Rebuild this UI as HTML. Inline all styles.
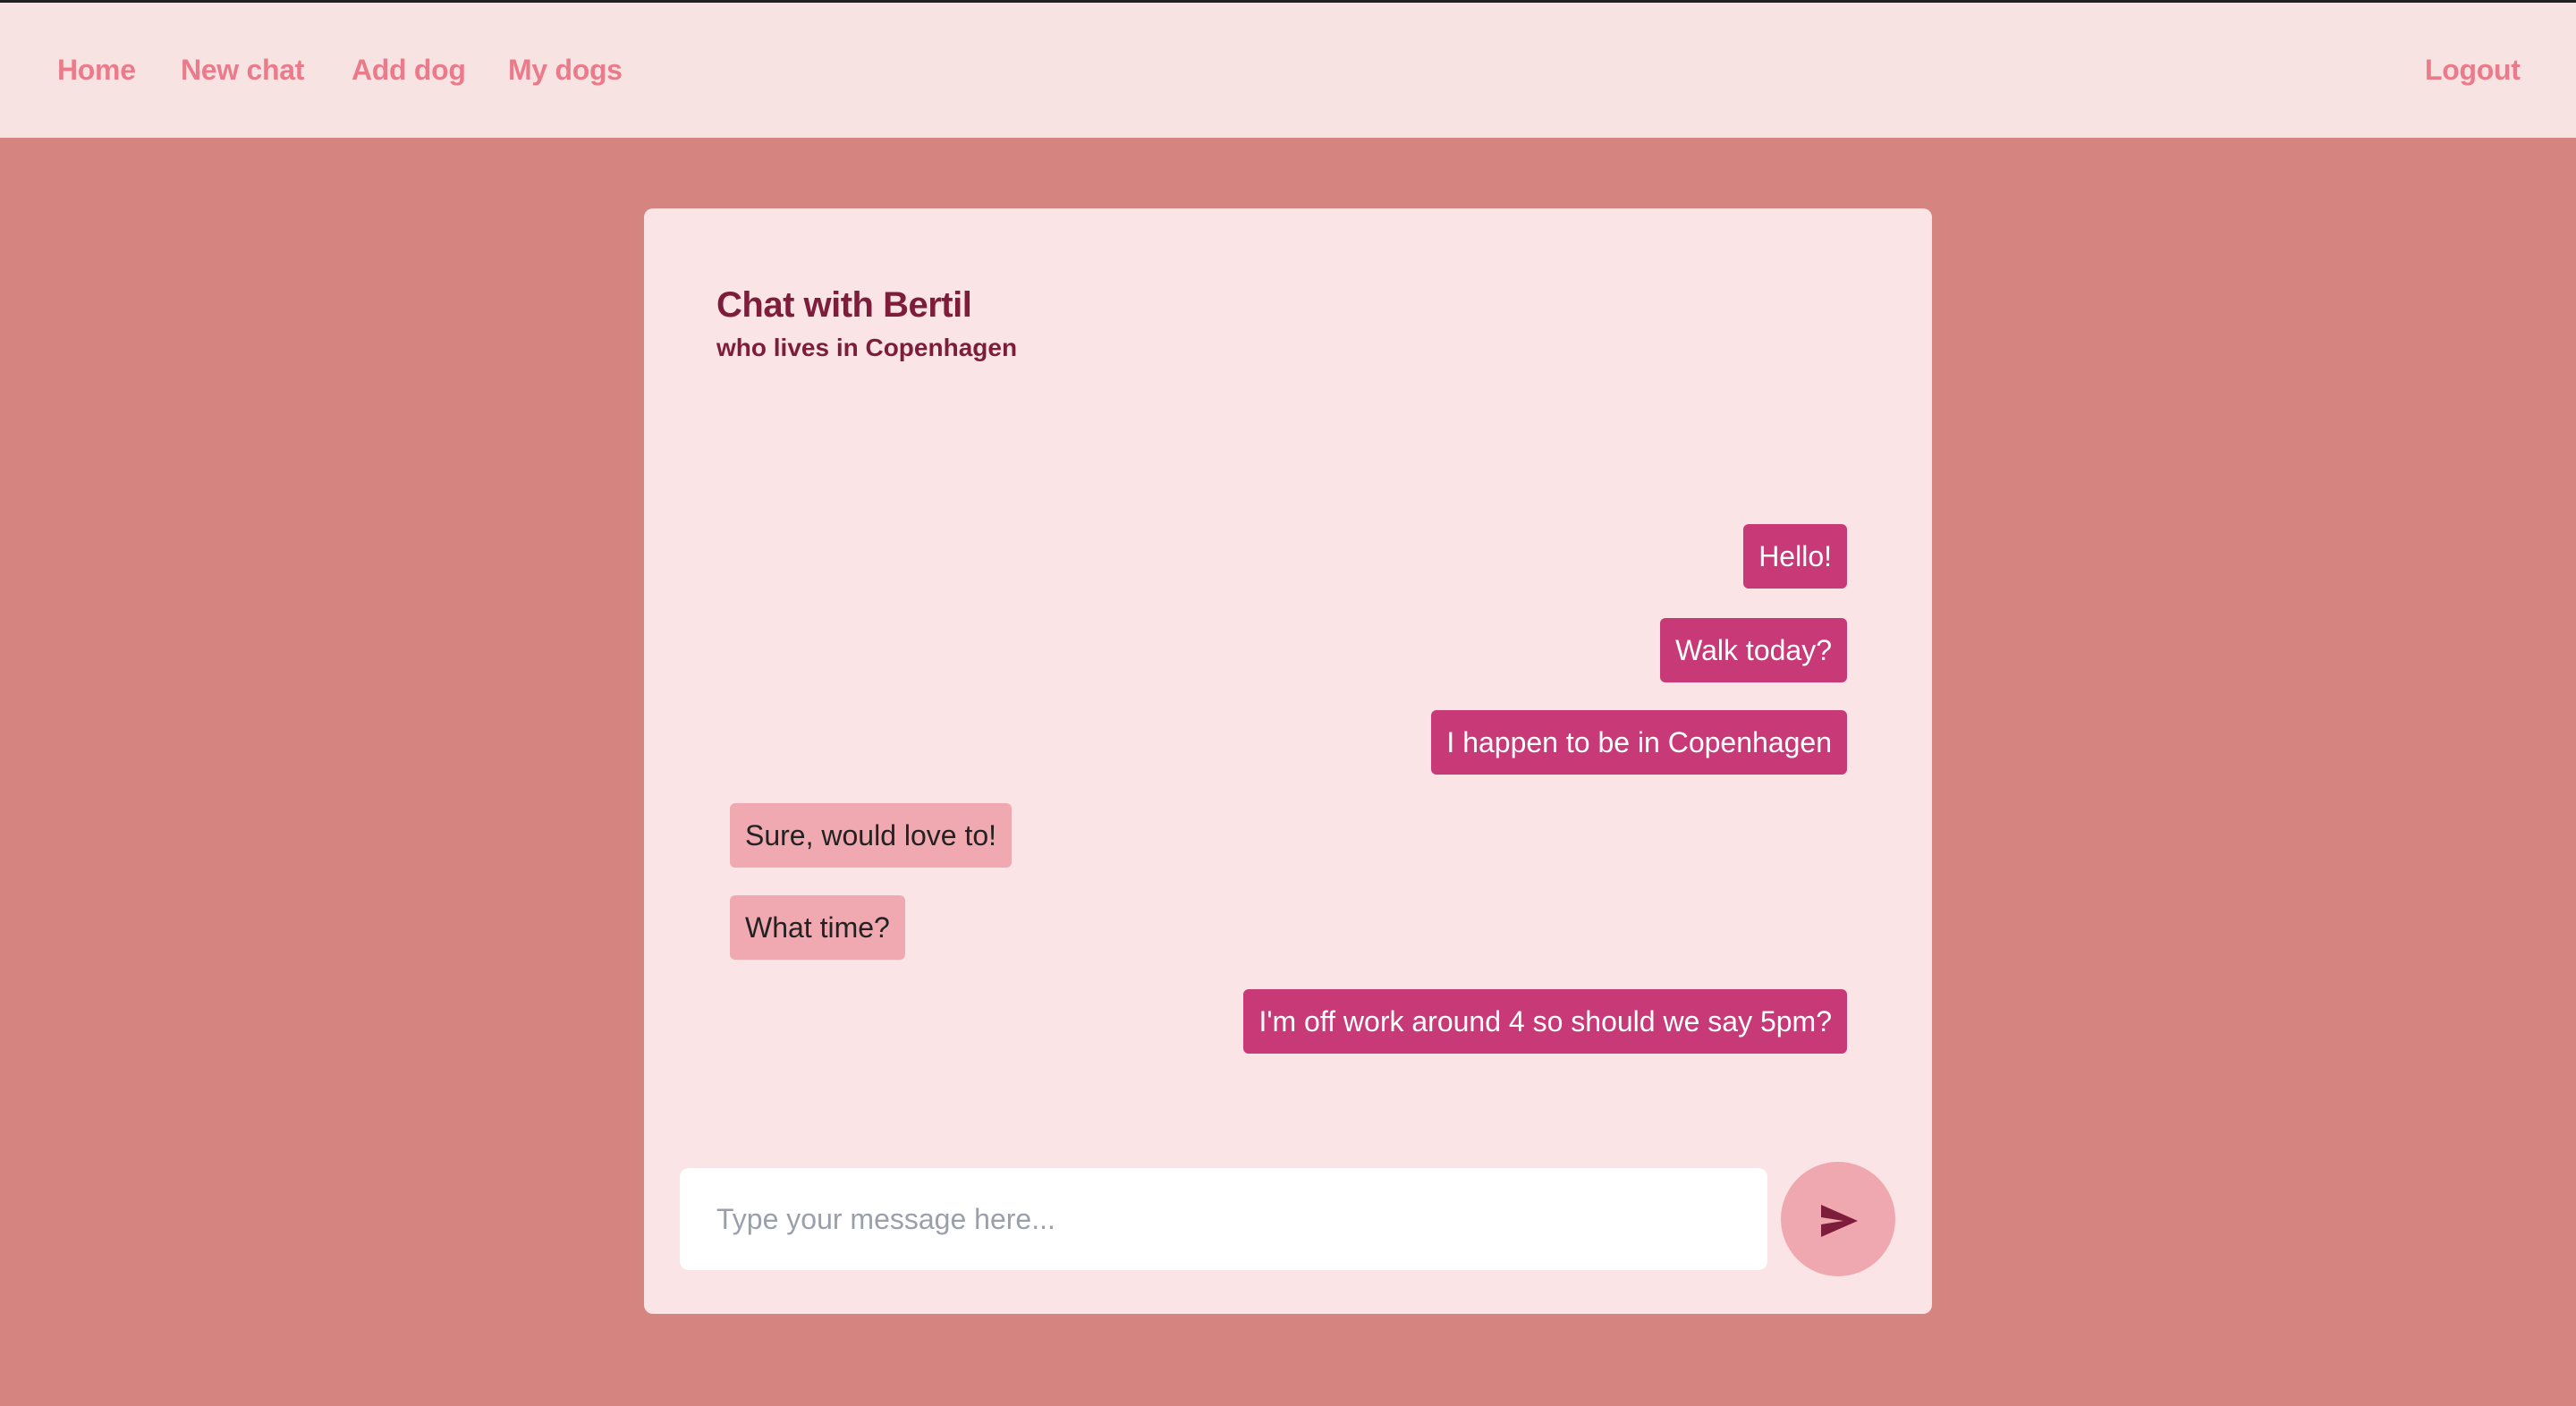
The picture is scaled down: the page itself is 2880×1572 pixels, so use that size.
<!DOCTYPE html>
<html><head><meta charset="utf-8"><style>
*{margin:0;padding:0;box-sizing:border-box}
body{width:2880px;height:1572px;background:#d58480;font-family:"Liberation Sans",sans-serif;position:relative;overflow:hidden}
.top{position:absolute;left:0;top:0;width:2880px;height:3px;background:#222}
nav{position:absolute;left:0;top:3px;width:2880px;height:151px;background:#f8e3e3}
nav a{position:absolute;top:0;line-height:151px;font-size:32px;color:#eb7b8b;text-decoration:none;font-weight:600;letter-spacing:-0.3px}
.card{position:absolute;left:720px;top:233px;width:1440px;height:1236px;background:#fae4e5;border-radius:10px}
h1{position:absolute;left:81px;top:86px;font-size:40px;color:#7e1d3b;font-weight:700;letter-spacing:-0.5px}
.sub{position:absolute;left:81px;top:140px;font-size:28px;color:#7e1d3b;font-weight:600}
.b{position:absolute;height:72px;line-height:72px;font-size:32px;padding:0 17px;border-radius:6px;white-space:nowrap}
.s{background:#c73a77;color:#fff;right:95px}
.r{background:#f0a9b0;color:#222;left:96px}
.in{position:absolute;left:40px;top:1073px;width:1216px;height:114px;background:#fff;border-radius:10px;font-size:32px;color:#9aa0ab;line-height:114px;padding-left:41px}
.btn{position:absolute;left:1271px;top:1066px;width:128px;height:128px;border-radius:50%;background:#f0a8b0}
</style></head><body>
<div class="top"></div>
<nav>
<a style="left:64px">Home</a>
<a style="left:202px">New chat</a>
<a style="left:393px">Add dog</a>
<a style="left:568px">My dogs</a>
<a style="left:2711px">Logout</a>
</nav>
<div class="card">
<h1>Chat with Bertil</h1>
<div class="sub">who lives in Copenhagen</div>
<div class="b s" style="top:353px">Hello!</div>
<div class="b s" style="top:458px">Walk today?</div>
<div class="b s" style="top:561px">I happen to be in Copenhagen</div>
<div class="b r" style="top:665px">Sure, would love to!</div>
<div class="b r" style="top:768px">What time?</div>
<div class="b s" style="top:873px">I'm off work around 4 so should we say 5pm?</div>
<div class="in">Type your message here...</div>
<div class="btn"><svg width="128" height="128" viewBox="0 0 128 128"><polygon points="45,48 86,66 45,84 45,70 70,66 45,62" fill="#7e1d3b"/></svg></div>
</div>
</body></html>
